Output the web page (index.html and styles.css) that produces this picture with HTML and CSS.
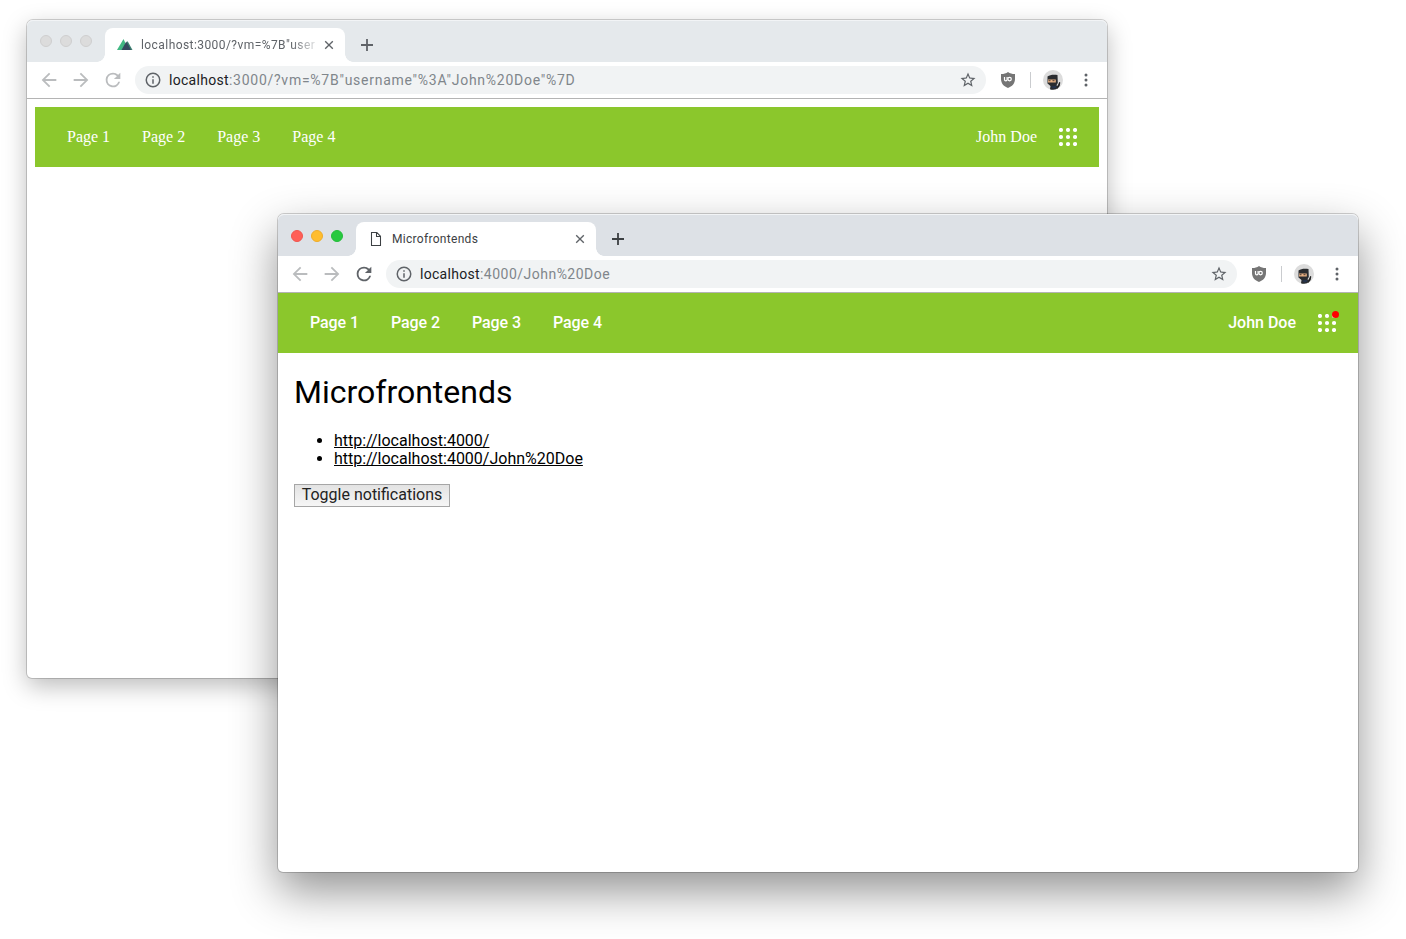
FILE: index.html
```html
<!DOCTYPE html>
<html lang="en">
<head>
<meta charset="utf-8">
<title>Microfrontends</title>
<link rel="stylesheet" href="styles.css">
</head>
<body>
<svg class="defs" width="0" height="0" aria-hidden="true">
  <symbol id="back" viewBox="0 0 24 24"><path d="M20 11H7.83l5.59-5.59L12 4l-8 8 8 8 1.41-1.41L7.83 13H20z"/></symbol>
  <symbol id="forward" viewBox="0 0 24 24"><path d="M12 4l-1.41 1.41L16.17 11H4v2h12.17l-5.58 5.59L12 20l8-8z"/></symbol>
  <symbol id="reload" viewBox="0 0 24 24"><path d="M17.65 6.35A7.96 7.96 0 0 0 12 4a8 8 0 1 0 7.73 10h-2.08A6 6 0 1 1 12 6c1.66 0 3.14.69 4.22 1.78L13 11h7V4z"/></symbol>
  <symbol id="info" viewBox="0 0 24 24"><path d="M11 17h2v-6h-2zm1-15a10 10 0 1 0 0 20 10 10 0 0 0 0-20zm0 18a8 8 0 1 1 0-16 8 8 0 0 1 0 16zM11 9h2V7h-2z"/></symbol>
  <symbol id="star" viewBox="0 0 24 24"><path d="M22 9.24l-7.19-.62L12 2 9.19 8.63 2 9.24l5.46 4.73L5.82 21 12 17.27 18.18 21l-1.63-7.03zM12 15.4l-3.76 2.27 1-4.28-3.32-2.88 4.38-.38L12 6.1l1.71 4.04 4.38.38-3.32 2.88 1 4.28z"/></symbol>
  <symbol id="close" viewBox="0 0 10 10"><path d="M1.200 1.200l7.600 7.600M8.800 1.200l-7.600 7.600" fill="none" stroke="currentColor" stroke-width="1.350"/></symbol>
  <symbol id="plus" viewBox="0 0 12 12"><path d="M6 0v12M0 6h12" fill="none" stroke="currentColor" stroke-width="1.800"/></symbol>
  <symbol id="shield" viewBox="0 0 14 16"><path d="M7 0c2 1.500 4 2 7 2v5c0 4.500-3 7.500-7 9-4-1.500-7-4.500-7-9V2c3 0 5-.5 7-2z" fill="#757575"/><path d="M3.500 5v2.500a1.300 1.300 0 0 0 2.600 0V5" fill="none" stroke="#fff" stroke-width="1.200"/><circle cx="8.600" cy="7.100" r="1.700" fill="none" stroke="#fff" stroke-width="1.200"/></symbol>
  <symbol id="ninja" viewBox="0 0 20 20"><circle cx="10" cy="10" r="10" fill="#dcdcdc"/><path d="M13 18l2.200-3.500 1-2.500 1.100.5-.6 3.500-2.200 2.800z" fill="#222"/><path d="M4.500 6.500C7 4.500 11 4.500 14.500 5l.3 8-1.200 2 .9 3-1.500 1.300c-2 .7-4.500.6-6-.1L7.500 16l-3-2.500z" fill="#2a2c2f"/><path d="M5 9.500h7.800v3H5z" fill="#e6b184"/><path d="M5.500 10.700h2M9.500 10.700h2" stroke="#4b3a31" stroke-width="1"/><path d="M8 16.500l5-.8.5 2-3.500.8z" fill="#26334c"/></symbol>
  <symbol id="dots" viewBox="0 0 4 14"><circle cx="2" cy="2" r="1.500"/><circle cx="2" cy="7" r="1.500"/><circle cx="2" cy="12" r="1.500"/></symbol>
  <symbol id="grid" viewBox="0 0 18 18"><g><circle cx="2" cy="2" r="2.100"/><circle cx="9" cy="2" r="2.100"/><circle cx="16" cy="2" r="2.100"/><circle cx="2" cy="9" r="2.100"/><circle cx="9" cy="9" r="2.100"/><circle cx="16" cy="9" r="2.100"/><circle cx="2" cy="16" r="2.100"/><circle cx="9" cy="16" r="2.100"/><circle cx="16" cy="16" r="2.100"/></g></symbol>
  <symbol id="nuxt" viewBox="0 0 16 11"><path d="M0 11L6.500 0l5 11z" fill="#41b883"/><path d="M7 11l3.500-9 5 9z" fill="#3b8070"/><path d="M4.500 11L9.300 2.500 14 11z" fill="#35495e"/></symbol>
  <symbol id="page" viewBox="0 0 12 14"><path d="M1.500.5h5.300L10.500 4.300v9.200h-9zM6.500.5v4h4" fill="none" stroke="currentColor" stroke-width="1.050"/></symbol>
</svg>

<section class="window window-back">
  <div class="titlebar">
    <div class="lights"><i></i><i></i><i></i></div>
    <div class="tab">
      <svg class="favicon nuxt"><use href="#nuxt"/></svg>
      <span class="tab-title tab-fade">localhost:3000/?vm=%7B"user</span>
      <svg class="close"><use href="#close"/></svg>
    </div>
    <svg class="plus"><use href="#plus"/></svg>
  </div>
  <div class="toolbar">
    <svg class="nav dim"><use href="#back"/></svg>
    <svg class="nav dim"><use href="#forward"/></svg>
    <svg class="nav reload"><use href="#reload"/></svg>
    <div class="address">
      <svg class="info"><use href="#info"/></svg>
      <span class="url url-long"><b>localhost</b>:3000/?vm=%7B"username"%3A"John%20Doe"%7D</span>
      <svg class="star"><use href="#star"/></svg>
    </div>
    <svg class="shield"><use href="#shield"/></svg>
    <i class="separator"></i>
    <svg class="avatar"><use href="#ninja"/></svg>
    <svg class="dots"><use href="#dots"/></svg>
  </div>
  <div class="viewport padded">
    <header class="app-header serif">
      <nav><span>Page 1</span><span>Page 2</span><span>Page 3</span><span>Page 4</span></nav>
      <div class="user"><span>John Doe</span><div class="apps"><svg><use href="#grid"/></svg></div></div>
    </header>
  </div>
</section>

<section class="window window-front">
  <div class="titlebar">
    <div class="lights"><i></i><i></i><i></i></div>
    <div class="tab">
      <svg class="favicon page"><use href="#page"/></svg>
      <span class="tab-title">Microfrontends</span>
      <svg class="close"><use href="#close"/></svg>
    </div>
    <svg class="plus"><use href="#plus"/></svg>
  </div>
  <div class="toolbar">
    <svg class="nav dim"><use href="#back"/></svg>
    <svg class="nav dim"><use href="#forward"/></svg>
    <svg class="nav reload"><use href="#reload"/></svg>
    <div class="address">
      <svg class="info"><use href="#info"/></svg>
      <span class="url"><b>localhost</b>:4000/John%20Doe</span>
      <svg class="star"><use href="#star"/></svg>
    </div>
    <svg class="shield"><use href="#shield"/></svg>
    <i class="separator"></i>
    <svg class="avatar"><use href="#ninja"/></svg>
    <svg class="dots"><use href="#dots"/></svg>
  </div>
  <div class="viewport">
    <header class="app-header sans">
      <nav><span>Page 1</span><span>Page 2</span><span>Page 3</span><span>Page 4</span></nav>
      <div class="user"><span>John Doe</span><div class="apps"><svg><use href="#grid"/></svg><i class="badge"></i></div></div>
    </header>
    <main class="content">
      <h1>Microfrontends</h1>
      <ul>
        <li><a>http://localhost:4000/</a></li>
        <li><a>http://localhost:4000/John%20Doe</a></li>
      </ul>
      <button class="toggle">Toggle notifications</button>
    </main>
  </div>
</section>
</body>
</html>
```

FILE: styles.css
```css
* { box-sizing: border-box; }
body { margin: 0; width: 1406px; height: 939px; position: relative; overflow: hidden; background: #fff; font-family: Roboto, sans-serif; }
svg { display: block; flex: none; fill: currentColor; }
.defs { position: absolute; }

.window { position: absolute; width: 1080px; height: 658px; border-radius: 6px 6px 5px 5px; background: #fff; display: flex; flex-direction: column; }
.window-back { left: 27px; top: 20px; box-shadow: 0 0 0 1px rgba(0,0,0,.17), 0 8px 25px rgba(0,0,0,.27); }
.window-front { left: 278px; top: 214px; box-shadow: 0 0 0 1px rgba(0,0,0,.18), 0 19px 46px rgba(0,0,0,.43); }

.titlebar { height: 42px; display: flex; align-items: flex-end; background: #dde1e6; border-radius: 6px 6px 0 0; box-shadow: inset 0 1px #f2f4f6; color: #3c4043; }
.window-back .titlebar { background: #e5e9ec; color: #5f6368; }
.lights { display: flex; gap: 8px; align-self: flex-start; padding: 15.500px 0 0 13px; width: 78px; }
.lights i { width: 12px; height: 12px; border-radius: 50%; background: #dcdcdc; border: 1px solid #cfcfcf; }
.window-back .lights { padding-top: 15px; }
.window-front .lights i:nth-child(1) { background: #ff5f57; border-color: #f0564f; }
.window-front .lights i:nth-child(2) { background: #ffbd2e; border-color: #eeac2b; }
.window-front .lights i:nth-child(3) { background: #28c940; border-color: #24bd3a; }
.tab { position: relative; width: 240px; height: 34px; border-radius: 8px 8px 0 0; background: #fff; display: flex; align-items: center; padding: 0 11px 0 12px; }
.tab::before, .tab::after { content: ""; position: absolute; bottom: 0; width: 8px; height: 8px; }
.tab::before { left: -8px; background: radial-gradient(circle at 0 0, transparent 7.5px, #fff 8px); }
.tab::after { right: -8px; background: radial-gradient(circle at 100% 0, transparent 7.5px, #fff 8px); }
.nuxt { width: 16px; height: 11px; margin: -1px 8px 0 0; }
.page { width: 12px; height: 14px; margin: 0 10px 0 2px; color: #3c4043; }
.tab-title { width: 176px; flex: none; font-size: 12px; line-height: 16px; letter-spacing: .3px; white-space: nowrap; overflow: hidden; }
.tab-fade { letter-spacing: .43px; -webkit-mask-image: linear-gradient(90deg, #000 150px, transparent 180px); mask-image: linear-gradient(90deg, #000 150px, transparent 180px); }
.close { width: 10px; height: 10px; margin-left: auto; color: #5f6368; }
.plus { width: 12px; height: 12px; margin: 0 0 11px 16px; }

.toolbar { height: 37px; display: flex; align-items: center; padding: 0 19px 0 11px; border-bottom: 1px solid #b4b4b4; color: #5f6368; }
.nav { width: 22px; height: 22px; margin-right: 10px; }
.dim, .window-back .reload { color: #babcbe; }
.address { width: 851px; height: 28px; margin-left: 1px; border-radius: 14px; background: #f1f3f4; display: flex; align-items: center; padding: 0 9px; }
.info { width: 18px; height: 18px; }
.url { margin-left: 7px; font-size: 14px; line-height: 20px; letter-spacing: .49px; color: #80868b; white-space: nowrap; }
.url-long { letter-spacing: .68px; }
.url b { font-weight: 400; color: #202124; letter-spacing: .3px; }
.url-long { letter-spacing: .74px; }
.star { width: 18px; height: 18px; margin-left: auto; }
.shield { width: 14px; height: 16px; margin-left: 15px; }
.separator { width: 1px; height: 16px; margin-left: 15px; background: #cacccf; }
.avatar { width: 20px; height: 20px; margin-left: 12px; }
.dots { width: 4px; height: 14px; margin-left: auto; }

.viewport { flex: 1; }
.padded { padding: 8px; }
.app-header { height: 60px; display: flex; align-items: center; justify-content: space-between; padding: 0 22px 0 32px; background: #8bc72c; color: #fff; font-size: 16px; line-height: 20px; }
.app-header nav { display: flex; gap: 32px; }
.serif { font-family: "Liberation Serif", serif; }
.sans { font-weight: 500; }
.sans nav { letter-spacing: -.08px; }
.user { display: flex; align-items: center; gap: 22px; }
.apps { position: relative; }
.apps svg { width: 18px; height: 18px; overflow: visible; }
.badge { position: absolute; right: -3px; top: -3px; width: 7px; height: 7px; border-radius: 50%; background: #f00; }

.content { padding: 20px 16px; color: #000; font-size: 16px; line-height: 18px; }
.content h1 { margin: 0; font-size: 32px; line-height: 38px; font-weight: 400; }
.content ul { margin: 21px 0 16px; padding-left: 40px; }
.content a { text-decoration: underline; }
.toggle { display: block; width: 156px; height: 23px; padding: 0 0 2px; border: 1px solid #a6a6a6; border-radius: 0; background: linear-gradient(#e3e3e3, #f6f6f6); color: #222; font: 400 16px/19px Roboto, sans-serif; }
```
